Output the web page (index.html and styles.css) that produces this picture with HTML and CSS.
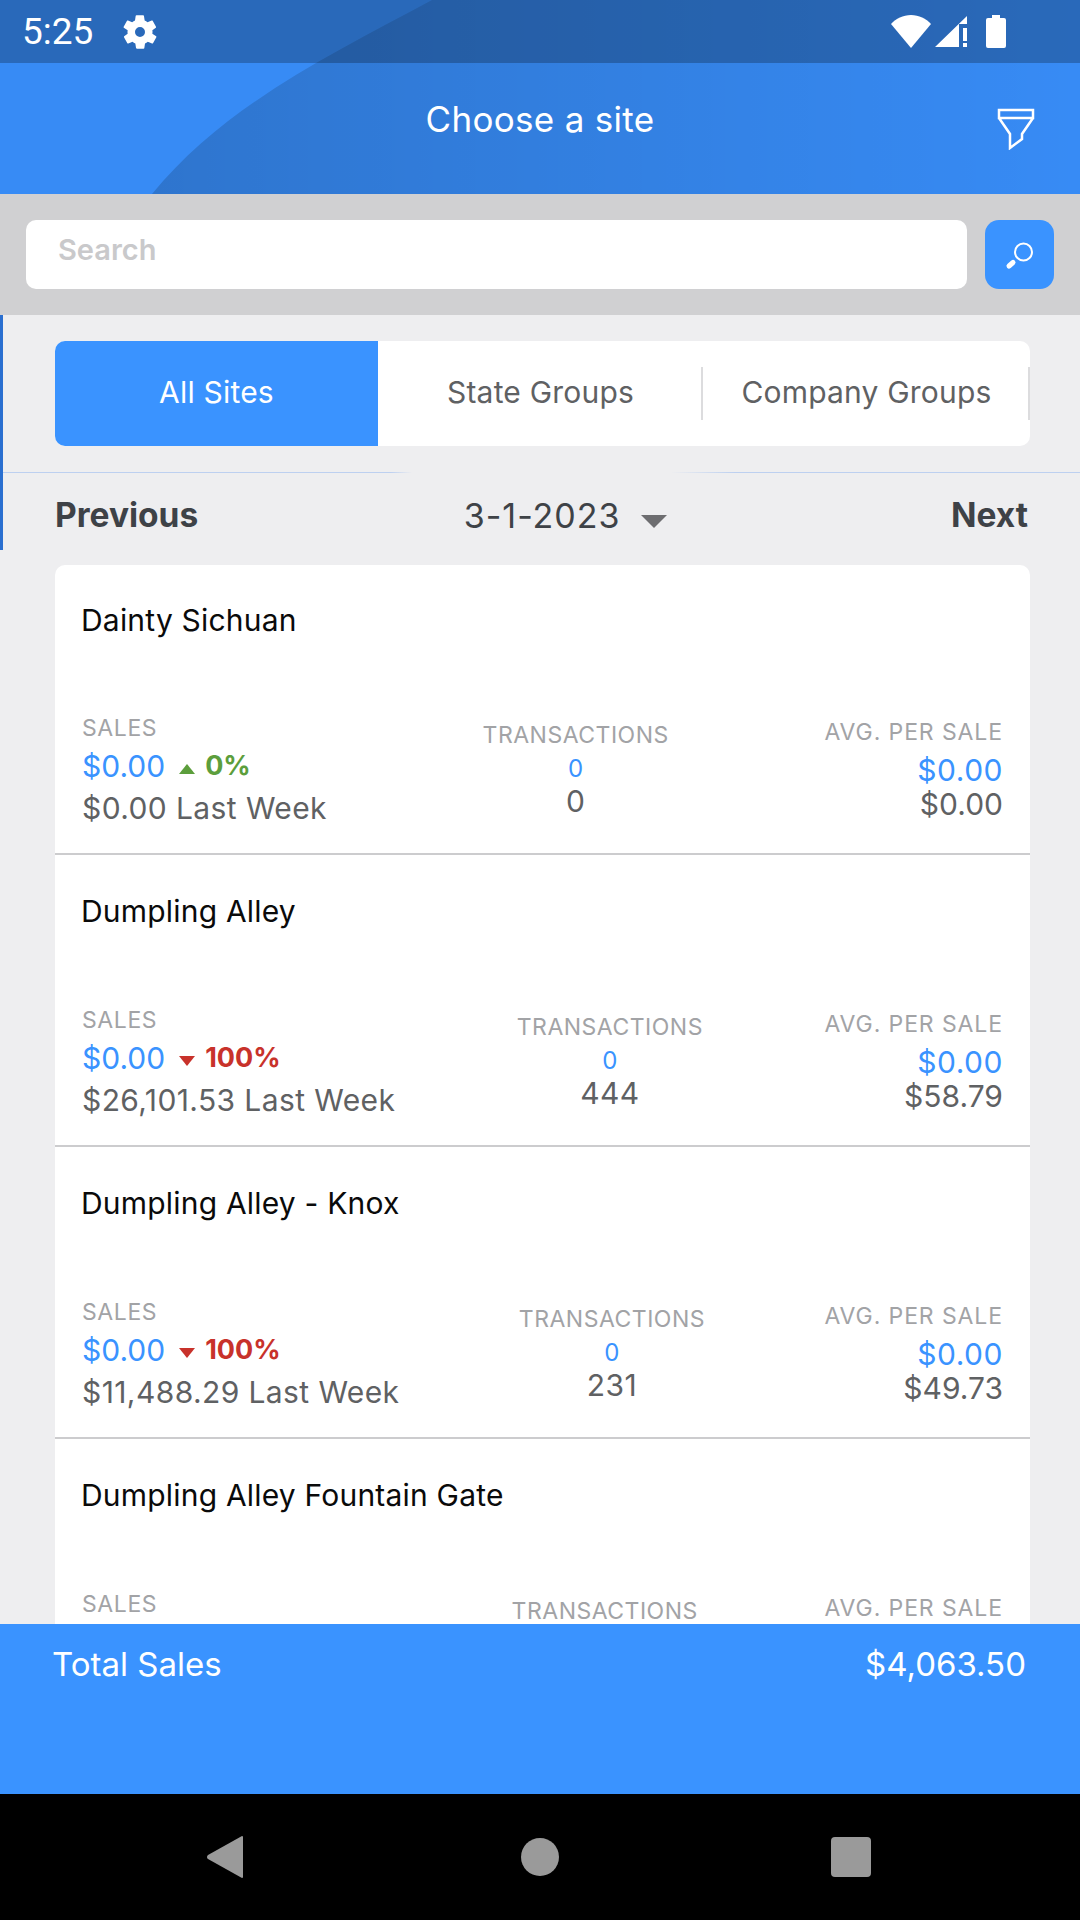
FILE: index.html
```html
<!DOCTYPE html>
<html lang="en">
<head>
	<meta charset="UTF-8">
	<title>Choose a site</title>
	<link rel="stylesheet" href="styles.css">
</head>
<body>
	<div class="top">
		<svg class="top-arc" width="1080" height="194" viewBox="0 0 1080 194">
			<defs>
				<linearGradient id="arcFade" x1="0" x2="1" y1="0" y2="0">
					<stop offset="0" stop-color="#000" stop-opacity=".16"></stop>
					<stop offset="1" stop-color="#000" stop-opacity="0"></stop>
				</linearGradient>
			</defs>
			<path d="M432 0C330 55 225 105 152 194H1080V0Z" fill="url(#arcFade)"></path>
		</svg>
		<div class="status">
			<div class="status-left">
				<span class="clock">5:25</span>
				<svg width="40" height="40" viewBox="0 0 24 24" fill="#fff"><path fill-rule="evenodd" d="M19.4 13c.1-.3.1-.7.1-1s0-.7-.1-1l2.100-1.600c.2-.2.2-.4.1-.6l-2-3.500c-.1-.2-.4-.3-.6-.2l-2.500 1c-.5-.4-1.100-.7-1.700-1l-.4-2.600c0-.3-.2-.5-.5-.5h-4c-.3 0-.5.2-.5.400l-.4 2.700c-.6.2-1.100.6-1.700 1l-2.500-1c-.2-.1-.5 0-.6.200l-2 3.500c-.1.200-.1.400.1.600L4.600 11c0 .3-.1.700-.1 1s0 .7.1 1l-2.100 1.600c-.2.2-.2.400-.1.600l2 3.500c.1.200.4.300.6.200l2.500-1c.5.4 1.100.7 1.700 1l.4 2.600c0 .3.2.5.5.5h4c.3 0 .5-.2.5-.4l.4-2.700c.6-.2 1.100-.6 1.700-1l2.500 1c.2.100.5 0 .6-.2l2-3.500c.1-.2.1-.4-.1-.6zM12 15a3 3 0 1 1 0-6 3 3 0 0 1 0 6z"></path></svg>
			</div>
			<div class="status-right">
				<svg width="40" height="33" viewBox="0 0 40 33" fill="#fff"><path d="M20 33 0 9C5 3.500 12 0 20 0s15 3.500 20 9z"></path></svg>
				<svg class="signal" width="32" height="32" viewBox="0 0 32 32" fill="#fff"><path d="M0 31 32 0v8h-8v23zM28 12h4v13h-4zM28 27h4v4h-4z"></path></svg>
				<svg class="battery" width="20" height="33" viewBox="0 0 20 33" fill="#fff"><path d="M6 0h8v3h4a2 2 0 0 1 2 2v26a2 2 0 0 1-2 2H2a2 2 0 0 1-2-2V5a2 2 0 0 1 2-2h4z"></path></svg>
			</div>
		</div>
		<div class="header">
			<span></span>
			<h1>Choose a site</h1>
			<svg class="filter-icon" width="38" height="42" viewBox="0 0 38 42" fill="none" stroke="#fff" stroke-width="2.500"><path d="M2 2h34v8H2zM2 10l11 16v14l12-9V26l11-16"></path></svg>
		</div>
	</div>

	<div class="search-band">
		<div class="search-input">Search</div>
		<div class="search-btn">
			<svg width="34" height="34" viewBox="0 0 34 34" fill="none" stroke="#fff"><circle cx="20.500" cy="14" r="8.500" stroke-width="2"></circle><path d="M6 28l4-3.500" stroke-width="5" stroke-linecap="round"></path></svg>
		</div>
	</div>

	<div class="main">
		<div class="filters">
			<div class="tabs">
				<div class="tab tab-active">All Sites</div>
				<div class="tab tab-line">State Groups</div>
				<div class="tab tab-line">Company Groups</div>
			</div>
			<div class="rule"></div>
			<div class="date-row">
				<span class="date-link">Previous</span>
				<span class="date-pick">3-1-2023<i class="caret"></i></span>
				<span class="date-link">Next</span>
			</div>
		</div>

		<div class="sites">
			<div class="site">
				<div class="site-name">Dainty Sichuan</div>
				<div class="stats">
					<div class="col col-sales">
						<div class="label">SALES</div>
						<div class="amount">$0.00<i class="arrow arrow-up"></i><b class="up">0%</b></div>
						<div class="prev">$0.00 Last Week</div>
					</div>
					<div class="col col-mid">
						<div class="label">TRANSACTIONS</div>
						<div class="count">0</div>
						<div class="prev">0</div>
					</div>
					<div class="col col-avg">
						<div class="label">AVG. PER SALE</div>
						<div class="amount">$0.00</div>
						<div class="prev">$0.00</div>
					</div>
				</div>
			</div>
			<div class="site">
				<div class="site-name">Dumpling Alley</div>
				<div class="stats">
					<div class="col col-sales">
						<div class="label">SALES</div>
						<div class="amount">$0.00<i class="arrow arrow-down"></i><b class="down">100%</b></div>
						<div class="prev">$26,101.53 Last Week</div>
					</div>
					<div class="col col-mid">
						<div class="label">TRANSACTIONS</div>
						<div class="count">0</div>
						<div class="prev">444</div>
					</div>
					<div class="col col-avg">
						<div class="label">AVG. PER SALE</div>
						<div class="amount">$0.00</div>
						<div class="prev">$58.79</div>
					</div>
				</div>
			</div>
			<div class="site">
				<div class="site-name">Dumpling Alley - Knox</div>
				<div class="stats">
					<div class="col col-sales">
						<div class="label">SALES</div>
						<div class="amount">$0.00<i class="arrow arrow-down"></i><b class="down">100%</b></div>
						<div class="prev">$11,488.29 Last Week</div>
					</div>
					<div class="col col-mid">
						<div class="label">TRANSACTIONS</div>
						<div class="count">0</div>
						<div class="prev">231</div>
					</div>
					<div class="col col-avg">
						<div class="label">AVG. PER SALE</div>
						<div class="amount">$0.00</div>
						<div class="prev">$49.73</div>
					</div>
				</div>
			</div>
			<div class="site">
				<div class="site-name">Dumpling Alley Fountain Gate</div>
				<div class="stats">
					<div class="col col-sales col-wide">
						<div class="label">SALES</div>
						<div class="amount">&nbsp;</div>
						<div class="prev">&nbsp;</div>
					</div>
					<div class="col col-mid">
						<div class="label">TRANSACTIONS</div>
						<div class="count">&nbsp;</div>
						<div class="prev">&nbsp;</div>
					</div>
					<div class="col col-avg">
						<div class="label">AVG. PER SALE</div>
						<div class="amount">&nbsp;</div>
						<div class="prev">&nbsp;</div>
					</div>
				</div>
			</div>
		</div>
	</div>

	<div class="total">
		<span>Total Sales</span>
		<span>$4,063.50</span>
	</div>

	<div class="nav">
		<svg width="36" height="42" viewBox="0 0 36 42" fill="#9a9a9a"><path d="M35 0a1 1 0 0 1 1 1v40a1 1 0 0 1-1 1L1 23a2.500 2.500 0 0 1 0-4z"></path></svg>
		<div class="nav-home"></div>
		<div class="nav-recent"></div>
	</div>
</body>
</html>
```

FILE: styles.css
```css
*{
	margin: 0;
	padding: 0;
	box-sizing: border-box;
}
body{
	width: 1080px;
	height: 1920px;
	overflow: hidden;
	display: flex;
	flex-direction: column;
	background: #eeeef0;
	font-family: Inter, "Liberation Sans", sans-serif;
	color: #5f6163;
}

/* blue top area */
.top{
	position: relative;
	background: #378bf5;
}
.top-arc{
	position: absolute;
	left: 0;
	top: 0;
}
.status{
	position: relative;
	height: 63px;
	padding: 0 74px 0 22px;
	display: flex;
	align-items: center;
	justify-content: space-between;
	background: rgba(0,0,0,.24);
}
.status-left{
	display: flex;
	align-items: center;
	gap: 27px;
}
.clock{
	font-family: Roboto, sans-serif;
	font-size: 37px;
	color: #fff;
}
.status-right{
	display: flex;
	align-items: center;
	gap: 4px;
}
.battery{
	margin-left: 15px;
}
.header{
	position: relative;
	height: 131px;
	padding: 0 45px;
	display: grid;
	grid-template-columns: 1fr auto 1fr;
	align-items: center;
}
.header h1{
	font-size: 35px;
	font-weight: 400;
	letter-spacing: .3px;
	color: #fff;
	margin-bottom: 20px;
}
.filter-icon{
	justify-self: end;
}

.search-band{
	height: 121px;
	padding: 26px;
	display: flex;
	gap: 18px;
	background: #d0d0d2;
}
.search-input{
	flex: 1;
	padding: 12px 32px 0;
	border-radius: 10px;
	background: #fff;
	font-size: 29px;
	font-weight: 600;
	color: #c9c9cb;
}
.search-btn{
	width: 69px;
	display: flex;
	align-items: center;
	justify-content: center;
	border-radius: 14px;
	background: #3a93ff;
}

.main{
	flex: 1;
	overflow: hidden;
}
.filters{
	height: 235px;
	padding-top: 26px;
	border-left: 3px solid #2a6fd0;
}
.tabs{
	height: 105px;
	margin: 0 50px 0 52px;
	display: flex;
	border-radius: 10px;
	overflow: hidden;
	background: #fff;
}
.tab{
	padding-bottom: 4px;
	display: flex;
	align-items: center;
	justify-content: center;
	font-size: 30px;
	letter-spacing: .2px;
}
.tab:nth-child(1){
	width: 323px;
}
.tab:nth-child(2){
	width: 325px;
}
.tab:nth-child(3){
	flex: 1;
}
.tab-active{
	background: #3a93ff;
	color: #fff;
}
.tab-line{
	position: relative;
}
.tab-line::after{
	content: "";
	position: absolute;
	right: 0;
	top: 26px;
	bottom: 26px;
	width: 2px;
	background: #dcdcde;
}
.rule{
	height: 1px;
	margin-top: 26px;
	background: linear-gradient(90deg, #bdd0f0 36%, #eeeef0 38%, #eeeef0 62%, #bdd0f0 68%);
}
.date-row{
	height: 77px;
	margin: 0 52px;
	padding-top: 7px;
	display: flex;
	align-items: center;
	justify-content: space-between;
	color: #3e4247;
}
.date-link{
	font-size: 33.500px;
	font-weight: 700;
}
.date-pick{
	display: flex;
	align-items: center;
	font-size: 34px;
	letter-spacing: 1px;
	margin-right: 19px;
}
.caret{
	margin: 12px 0 0 20px;
	border-left: 13px solid transparent;
	border-right: 13px solid transparent;
	border-top: 13px solid #6d6d70;
}

/* site list */
.sites{
	margin: 15px 50px 0 55px;
	border-radius: 10px 10px 0 0;
	overflow: hidden;
	background: #fff;
}
.site{
	height: 292px;
	padding: 38px 27px 0;
	border-bottom: 2px solid #ccccce;
}
.site:first-child{
	height: 290px;
	padding-top: 37px;
}
.site-name{
	margin-left: -1px;
	font-size: 30px;
	letter-spacing: .2px;
	line-height: 36px;
	color: #0a0a0a;
}
.stats{
	height: 100px;
	margin-top: 81px;
	display: flex;
	align-items: center;
	justify-content: space-between;
}
.site:first-child .stats{
	margin-top: 80px;
}
.col-sales{
	line-height: 40px;
}
.col-sales .amount{
	margin-top: -2px;
}
.col-sales .prev{
	margin-top: 2px;
}
.col-wide{
	width: 303px;
}
.col-mid{
	text-align: center;
	line-height: 33px;
}
.col-mid .label{
	letter-spacing: .5px;
}
.col-avg{
	text-align: right;
	line-height: 36px;
}
.col-avg .label{
	letter-spacing: .9px;
}
.col-avg .amount{
	margin-top: 2px;
	justify-content: flex-end;
	letter-spacing: .5px;
}
.col-avg .prev{
	margin-top: -2px;
	letter-spacing: 0;
}
.label{
	font-size: 23px;
	letter-spacing: .6px;
	color: #a2a3a6;
}
.amount{
	display: flex;
	align-items: center;
	font-size: 30px;
	color: #3a93ff;
}
.count{
	font-size: 24px;
	color: #3a93ff;
}
.prev{
	font-size: 30px;
	letter-spacing: .4px;
}
.arrow{
	margin: 6px 10px 0 14px;
	border-left: 8px solid transparent;
	border-right: 8px solid transparent;
}
.arrow-up{
	border-bottom: 10px solid #5c9e3c;
}
.arrow-down{
	border-top: 10px solid #c8322b;
}
.amount b{
	font-weight: 700;
	font-size: 27px;
}
.up{
	color: #5c9e3c;
}
.down{
	color: #c8322b;
}

.total{
	height: 170px;
	padding: 20px 54px 0 52px;
	display: flex;
	justify-content: space-between;
	background: #3a93ff;
	font-size: 33px;
	color: #fff;
}
.nav{
	height: 126px;
	flex-shrink: 0;
	padding: 0 209px 0 207px;
	display: flex;
	align-items: center;
	justify-content: space-between;
	background: #000;
}
.nav-home{
	width: 38px;
	height: 38px;
	margin-left: 5px;
	border-radius: 50%;
	background: #9a9a9a;
}
.nav-recent{
	width: 40px;
	height: 40px;
	border-radius: 4px;
	background: #9a9a9a;
}
```
